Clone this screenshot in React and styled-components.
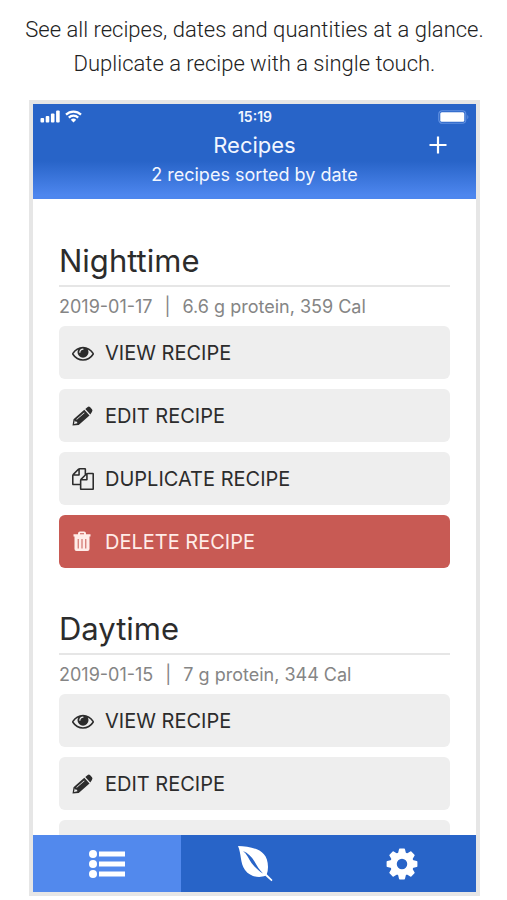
import styled, { createGlobalStyle } from "styled-components";

const GlobalStyle = createGlobalStyle`
  * {
    box-sizing: border-box;
  }

  body {
    background-color: #fff;
    color: #2c2c2c;
    font-family: Inter, "Liberation Sans", sans-serif;
    margin: 0;
  }

  h1, h2, p {
    font-weight: 400;
    margin: 0;
  }

  button {
    border: 0;
    cursor: pointer;
    font-family: inherit;
  }
`;

const Page = styled.div`
  display: flex;
  flex-direction: column;
  height: 100vh;
  padding: 13px 27px 4px 29px;
`;

const Intro = styled.p`
  && {
    font-weight: 300;
  }

  color: #222;
  font-family: Roboto, "Liberation Sans", sans-serif;
  font-size: 22px;
  line-height: 34px;
  margin: 0 -20px 19px;
  text-align: center;
`;

const Phone = styled.div`
  border: 4px solid #e6e6e6;
  display: flex;
  flex: 1;
  flex-direction: column;
  min-height: 0;
`;

const Header = styled.header`
  background: linear-gradient(#2864c8 60%, #4d86ee 96%);
  color: #f2f6ff;
  flex: none;
  padding-bottom: 10px;
  text-align: center;
`;

const StatusBar = styled.div`
  align-items: center;
  display: grid;
  font-size: 14px;
  font-weight: 600;
  grid-template-columns: 1fr auto 1fr;
  height: 25px;
  padding: 0 6px 0 7px;
`;

const Signals = styled.div`
  display: flex;
  gap: 5px;
`;

const Battery = styled.svg`
  justify-self: end;
`;

const TitleRow = styled.div`
  align-items: center;
  display: grid;
  grid-template-columns: 1fr auto 1fr;
  height: 32px;
  padding: 0 26px;
`;

const Title = styled.h1`
  font-size: 22px;
  grid-column: 2;
  line-height: 32px;
`;

const AddButton = styled.button`
  background: none;
  color: #fff;
  display: flex;
  justify-self: end;
  padding: 0;
`;

const Subtitle = styled.p`
  font-size: 18px;
  line-height: 28px;
`;

const List = styled.main`
  flex: 1;
  min-height: 0;
  overflow: hidden;
  padding: 41px 26px 0;
`;

const Recipe = styled.section`
  display: flex;
  flex-direction: column;
  margin-bottom: 40px;
`;

const RecipeName = styled.h2`
  border-bottom: 2px solid #e6e6e6;
  font-size: 31px;
  line-height: 42px;
  padding-bottom: 3px;
`;

const RecipeInfo = styled.p`
  color: #858585;
  display: flex;
  font-size: 18px;
  gap: 12px;
  line-height: 39px;
`;

const Actions = styled.div`
  display: flex;
  flex-direction: column;
  gap: 10px;
`;

const ActionButton = styled.button`
  align-items: center;
  background-color: ${({ $danger }) => ($danger ? "#c85a54" : "#eeeeee")};
  border-radius: 6px;
  color: ${({ $danger }) => ($danger ? "#ffece8" : "#2c2c2c")};
  display: flex;
  font-size: 20px;
  gap: 10px;
  height: 53px;
  padding: 0 12px;
  text-transform: uppercase;
`;

const TabBar = styled.nav`
  display: flex;
  flex: none;
  height: 57px;
`;

const Tab = styled.button`
  align-items: center;
  background-color: ${({ $active }) => ($active ? "#5289ed" : "#2864c8")};
  color: #fff;
  display: flex;
  flex: 1;
  justify-content: center;
  padding: 0;
`;

const icons = {
  eye: {
    viewBox: "0 0 1792 1792",
    path: "M1664 960q-152-236-381-353 61 104 61 225 0 185-131.500 316.500t-316.500 131.500-316.500-131.500-131.500-316.500q0-121 61-225-229 117-381 353 133 205 333.500 326.500t434.500 121.500 434.500-121.500 333.500-326.500zm-720-384q0-20-14-34t-34-14q-125 0-214.500 89.500t-89.500 214.500q0 20 14 34t34 14 34-14 14-34q0-86 61-147t147-61q20 0 34-14t14-34zm848 384q0 34-20 69-140 230-376.500 368.500t-499.500 138.500-499.500-139-376.500-368q-20-35-20-69t20-69q140-229 376.500-368t499.500-139 499.500 139 376.500 368q20 35 20 69z",
  },
  pencil: {
    viewBox: "0 0 24 22",
    path: "M1.500 20.500L2.500 14.200L13.300 4.800L18.500 10.400L7.700 19.900ZM3 19L6.400 18.300L6 16.800L4.200 16.500L3.800 15.200ZM14.300 4L16.700 1.900Q18 1.100 19.200 2.200L21 4.200Q22 5.600 20.900 6.900L19.300 9.500ZM5.800 14.800L13.600 8L13.100 7.400L5.300 14.200Z",
  },
  copy: {
    viewBox: "0 0 1792 1792",
    path: "M1696 384q40 0 68 28t28 68v1216q0 40-28 68t-68 28h-960q-40 0-68-28t-28-68v-288h-544q-40 0-68-28t-28-68v-672q0-40 20-88t48-76l408-408q28-28 76-48t88-20h416q40 0 68 28t28 68v328q68-40 128-40h416zm-544 213l-299 299h299v-299zm-640-384l-299 299h299v-299zm196 647l316-316v-416h-384v416q0 40-28 68t-68 28h-416v640h512v-256q0-40 20-88t48-76zm956 804v-1152h-384v416q0 40-28 68t-68 28h-416v640h896z",
  },
  trash: {
    viewBox: "0 0 24 22",
    path: "M7 3.200V2.500Q7 0.500 9 0.500H13Q15 0.500 15 2.500V3.200H19.500V5.500H2.500V3.200ZM9 3.200H13V2.200H9ZM3.500 5.500H18.500V18Q18.500 20 16.500 20H5.500Q3.500 20 3.500 18ZM6.700 8V17.500H7.700V8ZM10.500 8V17.500H11.500V8ZM14.300 8V17.500H15.300V8Z",
  },
};

const actions = [
  { icon: "eye", label: "View recipe" },
  { icon: "pencil", label: "Edit recipe" },
  { icon: "copy", label: "Duplicate recipe" },
  { icon: "trash", label: "Delete recipe", danger: true },
];

const recipes = [
  { name: "Nighttime", date: "2019-01-17", info: "6.6 g protein, 359 Cal" },
  { name: "Daytime", date: "2019-01-15", info: "7 g protein, 344 Cal" },
];

function ActionIcon({ name }) {
  const { viewBox, path } = icons[name];

  return (
    <svg width="24" height="22" viewBox={viewBox} fill="currentColor" fillRule="evenodd" aria-hidden="true">
      <path d={path} />
    </svg>
  );
}

function ListIcon() {
  return (
    <svg width="36" height="30" viewBox="0 0 36 30" fill="currentColor" aria-hidden="true">
      {[5, 15, 25].map((y) => (
        <g key={y}>
          <circle cx="4" cy={y} r="4" />
          <rect x="10" y={y - 2.5} width="26" height="5" />
        </g>
      ))}
    </svg>
  );
}

function LeafIcon() {
  return (
    <svg width="36" height="36" viewBox="8 8 36 36" fill="currentColor" aria-hidden="true">
      <path
        fillRule="evenodd"
        d="M9 8C22 9 39 10 39 29Q39 33 37.800 36.300L43.500 42L42.500 43.200L36.300 37.800C31 40 21.500 39.500 16 32C11 25 12.500 16 9 8ZM14 13C18 16 19.500 20.500 22.500 25C25.500 29 29.500 33 34 35.500C30.500 32 28 28 25.500 23.500C22.500 18.500 19 15 14 13Z"
      />
    </svg>
  );
}

function GearIcon() {
  return (
    <svg width="32" height="32" viewBox="-16 -16 32 32" aria-hidden="true">
      <circle r="8.500" fill="none" stroke="currentColor" strokeWidth="6.500" />
      {[0, 45, 90, 135, 180, 225, 270, 315].map((angle) => (
        <path
          key={angle}
          d="M-4-10.500L-3-14.700Q-2.900-15.400-2.200-15.400H2.200Q2.900-15.400 3-14.700L4-10.500Z"
          fill="currentColor"
          transform={`rotate(${angle})`}
        />
      ))}
    </svg>
  );
}

function PhoneStatus() {
  return (
    <StatusBar>
      <Signals>
        <svg width="20" height="13" viewBox="0 0 20 13" fill="#fff" aria-hidden="true">
          <rect x="0.500" y="8" width="3.600" height="4.500" rx="1" />
          <rect x="5.700" y="6" width="3.600" height="6.500" rx="1" />
          <rect x="10.900" y="3.500" width="3.600" height="9" rx="1" />
          <rect x="16.100" y="0.500" width="3.600" height="12" rx="1" />
        </svg>
        <svg width="17" height="13" viewBox="0 0 17 13" aria-hidden="true">
          <g fill="none" stroke="#fff" strokeWidth="2.200">
            <path d="M1 4.600A10.700 10.700 0 0 1 16 4.600" />
            <path d="M3.800 7.600A6.700 6.700 0 0 1 13.200 7.600" />
          </g>
          <path d="M8.500 12.500L5.800 9.700A4 4 0 0 1 11.200 9.700Z" fill="#fff" />
        </svg>
      </Signals>
      <span>15:19</span>
      <Battery width="32" height="14" viewBox="0 0 32 14" aria-hidden="true">
        <rect x="0.750" y="0.750" width="27" height="12.500" rx="3.500" fill="none" stroke="#5f8fe0" strokeWidth="1.200" />
        <rect x="2.300" y="2.300" width="24" height="9.400" rx="1.500" fill="#fff" />
        <path d="M29.300 4.700Q31.500 7 29.300 9.300Z" fill="#5f8fe0" />
      </Battery>
    </StatusBar>
  );
}

function App() {
  return (
    <Page>
      <GlobalStyle />
      <Intro>
        See all recipes, dates and quantities at a glance.
        <br />
        Duplicate a recipe with a single touch.
      </Intro>
      <Phone>
        <Header>
          <PhoneStatus />
          <TitleRow>
            <Title>Recipes</Title>
            <AddButton aria-label="Add recipe">
              <svg width="24" height="24" viewBox="0 0 24 24" stroke="currentColor" strokeWidth="2.200" aria-hidden="true">
                <path d="M12 3.500V20.500M3.500 12H20.500" />
              </svg>
            </AddButton>
          </TitleRow>
          <Subtitle>2 recipes sorted by date</Subtitle>
        </Header>
        <List>
          {recipes.map((recipe) => (
            <Recipe key={recipe.name}>
              <RecipeName>{recipe.name}</RecipeName>
              <RecipeInfo>
                <span>{recipe.date}</span>
                <span>|</span>
                <span>{recipe.info}</span>
              </RecipeInfo>
              <Actions>
                {actions.map((action) => (
                  <ActionButton key={action.icon} $danger={action.danger}>
                    <ActionIcon name={action.icon} />
                    {action.label}
                  </ActionButton>
                ))}
              </Actions>
            </Recipe>
          ))}
        </List>
        <TabBar>
          <Tab $active aria-label="Recipes">
            <ListIcon />
          </Tab>
          <Tab aria-label="Ingredients">
            <LeafIcon />
          </Tab>
          <Tab aria-label="Settings">
            <GearIcon />
          </Tab>
        </TabBar>
      </Phone>
    </Page>
  );
}

export default App;
